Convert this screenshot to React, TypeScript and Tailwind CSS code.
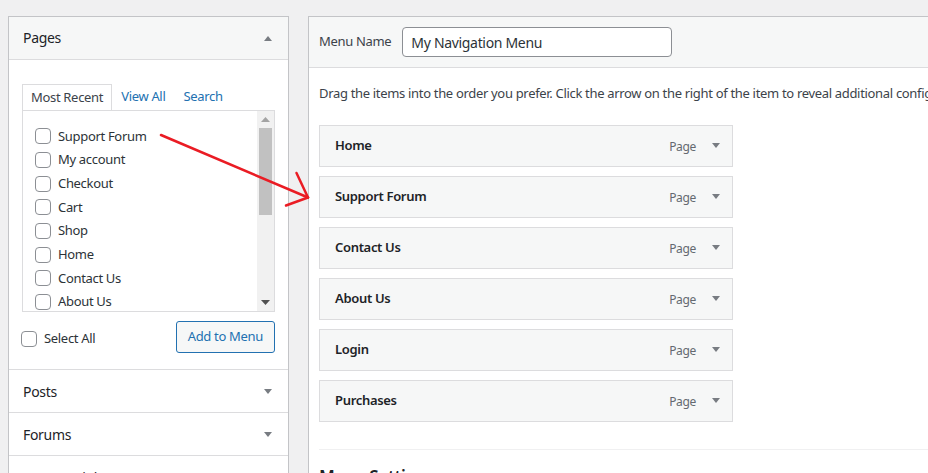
const pages = [
  "Support Forum",
  "My account",
  "Checkout",
  "Cart",
  "Shop",
  "Home",
  "Contact Us",
  "About Us",
];

const menuItems = ["Home", "Support Forum", "Contact Us", "About Us", "Login", "Purchases"];

function Caret({ up = false }: { up?: boolean }) {
  return (
    <svg width="8" height="5" viewBox="0 0 8 5" className="shrink-0">
      {up ? (
        <polygon points="0,5 8,5 4,0" fill="#787c82" />
      ) : (
        <polygon points="0,0 8,0 4,5" fill="#787c82" />
      )}
    </svg>
  );
}

function Checkbox() {
  return (
    <span className="block w-4 h-4 shrink-0 rounded-[4px] border border-[#8c8f94] bg-white" />
  );
}

function Section({ title }: { title: string }) {
  return (
    <div className="h-[43px] border-t border-[#dcdcde] flex items-center justify-between pl-[14px] pr-[16px]">
      <span className="text-[14px] text-[#1d2327]">{title}</span>
      <Caret />
    </div>
  );
}

export default function App() {
  return (
    <div
      className="relative h-[473px] w-[928px] overflow-hidden bg-[#f0f0f1] pt-4 pl-2 flex gap-[19px] tracking-[-0.32px]"
      style={{ fontFamily: '"Noto Sans", "Open Sans", sans-serif' }}
    >
      {/* left column: add items */}
      <div className="w-[281px] shrink-0 border border-b-0 border-[#c3c4c7] bg-white self-start">
        <div className="h-[43px] bg-[#f6f7f7] border-b border-[#dcdcde] flex items-center justify-between pl-[14px] pr-[16px]">
          <span className="text-[14px] text-[#1d2327] -mt-px">Pages</span>
          <Caret up />
        </div>
        <div className="px-[13px] pt-[24px] pb-[16px]">
          <div className="flex text-[13px]">
            <div className="h-[26px] px-2 border border-b-0 border-[#dcdcde] bg-white flex items-center text-[#3c434a] relative z-10 -mb-px">
              Most Recent
            </div>
            <div className="h-[26px] px-[9px] flex items-center text-[#2271b1]">View All</div>
            <div className="h-[26px] px-[9px] flex items-center text-[#2271b1]">Search</div>
          </div>
          <div className="h-[202px] border border-[#dcdcde] flex">
            <div className="flex-1 pl-3 pt-[13.5px] overflow-hidden">
              {pages.map((p) => (
                <div key={p} className="h-[23.7px] flex items-center gap-[7px] text-[13px] text-[#2c3338]">
                  <Checkbox />
                  <span>{p}</span>
                </div>
              ))}
            </div>
            <div className="w-[17px] bg-[#f1f1f1] flex flex-col items-center">
              <svg width="9" height="5" viewBox="0 0 9 5" className="mt-[6px]">
                <polygon points="0,5 9,5 4.5,0" fill="#a3a3a3" />
              </svg>
              <div className="w-[13px] h-[87px] bg-[#c1c1c1] mt-[6px]" />
              <svg width="9" height="5" viewBox="0 0 9 5" className="mt-auto mb-[6px]">
                <polygon points="0,0 9,0 4.5,5" fill="#505050" />
              </svg>
            </div>
          </div>
          <div className="mt-[9px] flex items-center justify-between">
            <label className="flex items-center gap-[7px] text-[13px] text-[#2c3338] -ml-px mt-[3px]">
              <Checkbox />
              <span>Select All</span>
            </label>
            <button className="h-[32px] px-[11px] rounded-[3px] border border-[#2271b1] bg-[#f6f7f7] text-[13px] text-[#2271b1]">
              Add to Menu
            </button>
          </div>
        </div>
        <Section title="Posts" />
        <Section title="Forums" />
        <Section title="Custom Links" />
      </div>

      {/* right column: menu structure */}
      <div className="w-[700px] shrink-0 border border-r-0 border-b-0 border-[#c3c4c7] bg-white self-start">
        <div className="h-[51px] bg-[#f6f7f7] border-b border-[#dcdcde] flex items-center pl-[10px]">
          <span className="text-[13px] text-[#3c434a]">Menu Name</span>
          <div className="ml-[11px] w-[270px] h-[30px] rounded-[4px] border border-[#8c8f94] bg-white flex items-center px-2 text-[14px] text-[#2c3338]">
            My Navigation Menu
          </div>
        </div>
        <div className="pl-[10px]">
          <p className="mt-[16px] text-[13px] text-[#3c434a] whitespace-nowrap">
            Drag the items into the order you prefer. Click the arrow on the right of the item to reveal additional configuration options.
          </p>
          <div className="mt-[21px] flex flex-col gap-[9px] w-[414px]">
            {menuItems.map((m) => (
              <div
                key={m}
                className="h-[42px] border border-[#dcdcde] bg-[#f6f7f7] flex items-center pl-[15px] pr-[12px]"
              >
                <span className="flex-1 text-[13px] font-semibold text-[#1d2327] mt-px">{m}</span>
                <span className="text-[12px] text-[#646970] mr-[16px] mt-[2px]">Page</span>
                <Caret />
              </div>
            ))}
          </div>
          <div className="mt-[27px] border-t border-[#f0f0f1]" />
          <div className="mt-[14px] text-[17px] font-semibold text-[#1d2327]">Menu Settings</div>
        </div>
      </div>

      {/* annotation arrow */}
      <svg className="absolute inset-0 pointer-events-none" width="928" height="473" viewBox="0 0 928 473">
        <g stroke="#ea1c24" strokeWidth="2.5" strokeLinecap="round" fill="none">
          <line x1="161" y1="135" x2="308" y2="197.5" />
          <line x1="296.5" y1="173" x2="308" y2="197.5" />
          <line x1="286" y1="205.5" x2="308" y2="197.5" />
        </g>
      </svg>
    </div>
  );
}
